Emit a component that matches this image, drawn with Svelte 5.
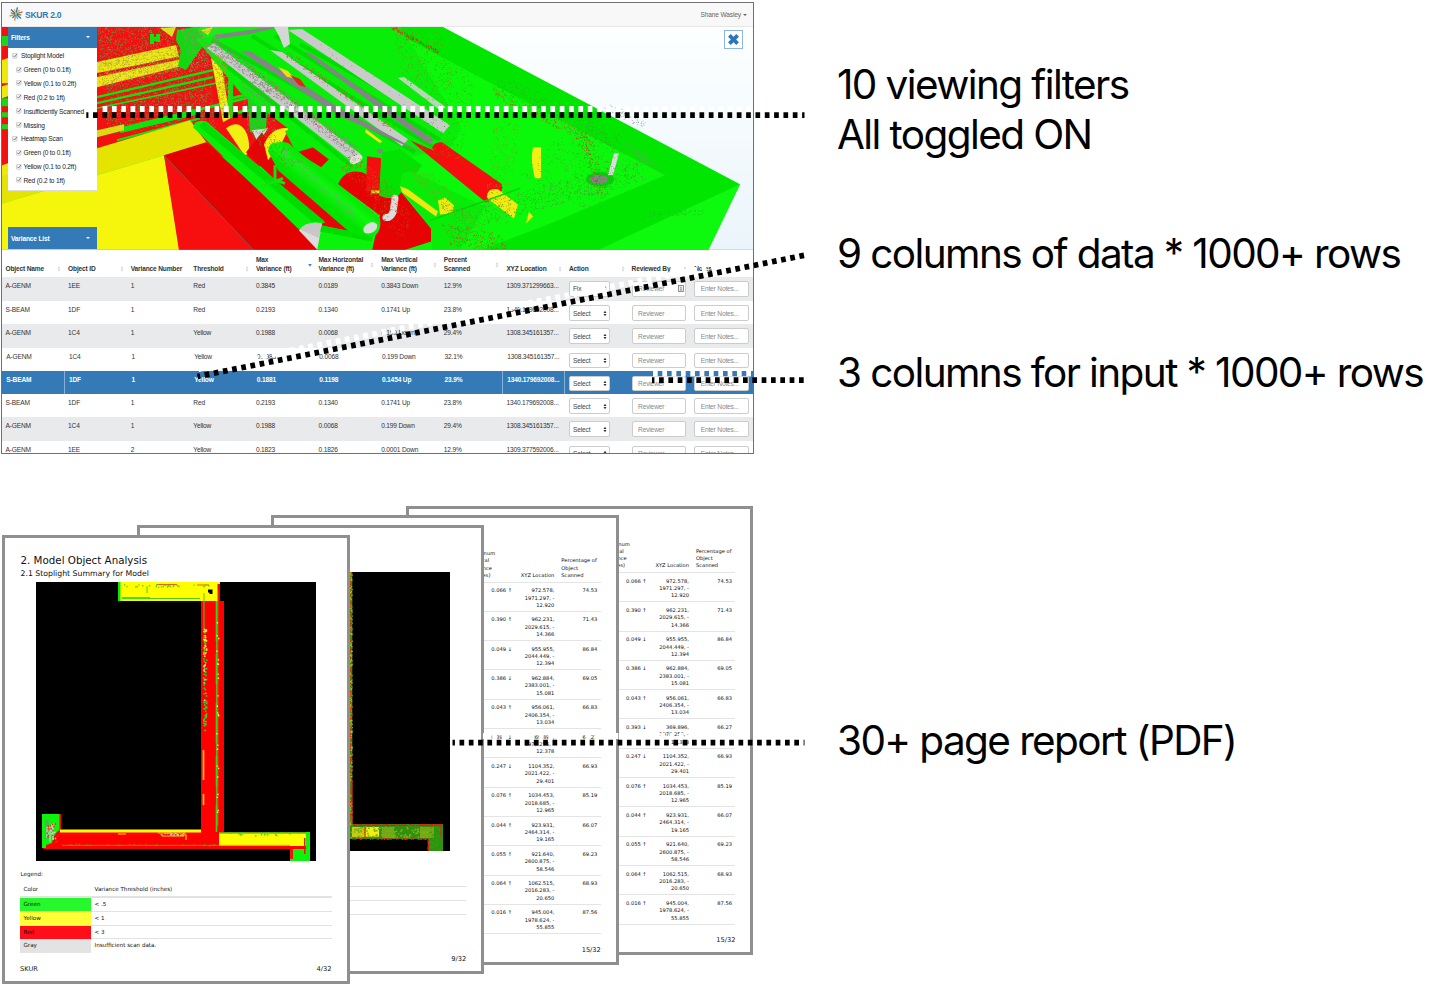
<script>
  const filters = [
    ['Stoplight Model', 0], ['Green (0 to 0.1ft)', 1], ['Yellow (0.1 to 0.2ft)', 1], ['Red (0.2 to 1ft)', 1],
    ['Insufficiently Scanned', 1], ['Missing', 1], ['Heatmap Scan', 0], ['Green (0 to 0.1ft)', 1],
    ['Yellow (0.1 to 0.2ft)', 1], ['Red (0.2 to 1ft)', 1]
  ];
  const columns = [
    ['Object Name'], ['Object ID'], ['Variance Number'], ['Threshold'], ['Max', 'Variance (ft)'],
    ['Max Horizontal', 'Variance (ft)'], ['Max Vertical', 'Variance (ft)'], ['Percent', 'Scanned'],
    ['XYZ Location'], ['Action'], ['Reviewed By'], ['Notes']
  ];
  const rows = [
    ['A-GENM', '1EE', '1', 'Red', '0.3845', '0.0189', '0.3843 Down', '12.9%', '1309.371299663...', 'Fix'],
    ['S-BEAM', '1DF', '1', 'Red', '0.2193', '0.1340', '0.1741 Up', '23.8%', '1340.179692008...', 'Select'],
    ['A-GENM', '1C4', '1', 'Yellow', '0.1988', '0.0068', '0.199 Down', '29.4%', '1308.345161357...', 'Select'],
    ['A-GENM', '1C4', '1', 'Yellow', '0.1983', '0.0068', '0.199 Down', '32.1%', '1308.345161357...', 'Select'],
    ['S-BEAM', '1DF', '1', 'Yellow', '0.1881', '0.1198', '0.1454 Up', '23.9%', '1340.179692008...', 'Select'],
    ['S-BEAM', '1DF', '1', 'Red', '0.2193', '0.1340', '0.1741 Up', '23.8%', '1340.179692008...', 'Select'],
    ['A-GENM', '1C4', '1', 'Yellow', '0.1988', '0.0068', '0.199 Down', '29.4%', '1308.345161357...', 'Select'],
    ['A-GENM', '1EE', '2', 'Yellow', '0.1823', '0.1826', '0.0001 Down', '12.9%', '1309.377592006...', 'Select']
  ];
  const report = [
    ['0.066 ↑', '972.578,', '1971.297, -', '12.920', '74.53'],
    ['0.390 ↑', '962.231,', '2029.615, -', '14.366', '71.43'],
    ['0.049 ↓', '955.955,', '2044.449, -', '12.394', '86.84'],
    ['0.386 ↓', '962.884,', '2383.001, -', '15.081', '69.05'],
    ['0.043 ↑', '956.061,', '2406.354, -', '13.034', '66.83'],
    ['0.393 ↓', '369.896,', '1978.256, -', '12.378', '66.27'],
    ['0.247 ↓', '1104.352,', '2021.422, -', '29.401', '66.93'],
    ['0.076 ↑', '1034.453,', '2018.685, -', '12.965', '85.19'],
    ['0.044 ↑', '923.931,', '2464.314, -', '19.165', '66.07'],
    ['0.055 ↑', '921.640,', '2600.875, -', '58.546', '69.23'],
    ['0.064 ↑', '1062.515,', '2016.283, -', '20.650', '68.93'],
    ['0.016 ↑', '945.004,', '1978.624, -', '55.855', '87.56']
  ];
  const legend = [['Green', '< .5', '#27f82d'], ['Yellow', '< 1', '#ffff38'], ['Red', '< 3', '#ff0d18'], ['Gray', 'Insufficient scan data.', '#e3e3e3']];

  let seed = 7;
  const rnd = () => ((seed = (seed * 16807) % 2147483647) / 2147483647);
  // Scatter n scan points over the parallelogram at (x, y) spanned by (ax, ay) and (bx, by).
  function scatter(n, x, y, ax, ay, bx, by, s = 0.8) {
    let d = '';
    for (let i = 0; i < n; i++) {
      const u = rnd(), v = rnd();
      d += `M${(x + u * ax + v * bx).toFixed(1)} ${(y + u * ay + v * by).toFixed(1)}h${s}v${s}h-${s}z`;
    }
    return d;
  }
  const noiseBack = [
    [scatter(2600, 97, 27, 108, 0, 10, 100), '#8a7a50'],
    [scatter(1000, 97, 27, 108, 0, 10, 105), '#20c818'],
    [scatter(700, 97, 62, 84, -17, 3, 24), '#a8a040']
  ];
  const noiseFront = [
    [scatter(750, 204, 43, 145, 111, 12, -5), '#858585'],
    [scatter(160, 230, 58, 125, 98, 6, -4), '#e04040'],
    [scatter(160, 280, 52, 110, 78, 6, -3), '#e04040'],
    [scatter(420, 180, 28, 40, 0, 10, 38), '#999070'],
    [scatter(340, 213, 55, 12, 0, 8, 60), '#a8a028'],
    [scatter(340, 240, 80, 28, 0, 8, 50), '#808878'],
    [scatter(260, 390, 27, 50, 4, 15, 60), '#7a8a20'],
    [scatter(150, 390, 28, 48, 26, 2, -3), '#d03010'],
    [scatter(280, 432, 60, 45, 10, -15, 90), '#55a010'],
    [scatter(220, 492, 85, 100, 50, 3, 12), '#b06018'],
    [scatter(260, 505, 75, 120, 62, -12, 12), '#3aa028'],
    [scatter(420, 575, 120, 70, 36, -55, 55), '#5a9838'],
    [scatter(140, 575, 135, 14, 2, 20, 58), '#b83c10'],
    [scatter(260, 495, 110, 25, 5, -12, 110), '#7aa018'],
    [scatter(620, 450, 210, 190, -52, 5, 22), '#4f9838'],
    [scatter(220, 440, 222, 60, 10, 10, 22), '#b05818'],
    [scatter(350, 398, 160, 38, 15, 50, 55), '#68b018'],
    [scatter(160, 245, 130, 40, 38, 18, -6), '#609020'],
    [scatter(260, 280, 155, 75, 66, 6, -6), '#78a078'],
    [scatter(190, 340, 168, 45, 40, 12, -18), '#b86010'],
    [scatter(160, 372, 180, 40, 32, -8, 26), '#a85810'],
    [scatter(80, 315, 30, 120, 40, 0, 50), '#70b030'],
    [scatter(70, 600, 107, 40, 20, 10, -4), '#909890'],
    [scatter(110, 622, 140, 25, 15, 15, 18), '#60a858'],
    [scatter(60, 648, 211, 55, -2, 0, 5), '#30a830']
  ];
  const planNoise = [
    [scatter(60, 203, 630, 3, 0, 0, 100, 1.6), '#18e018'],
    [scatter(20, 203, 630, 3, 0, 0, 70, 1.3), '#d8d8d8'],
    [scatter(22, 203, 628, 3, 0, 0, 40, 1.5), '#ffef20'],
    [scatter(24, 216, 600, 2, 0, 0, 225, 1.4), '#ffef20'],
    [scatter(30, 122, 584, 90, 0, 0, 3, 1.3), '#50d020'],
    [scatter(24, 60, 843, 160, 1, 0, 2, 1), '#50b010'],
    [scatter(18, 160, 832, 24, 0, 0, 3, 1.5), '#d0c8a0'],
    [scatter(16, 222, 832, 80, 0, 0, 3, 1.5), '#30e020'],
    [scatter(16, 46, 822, 10, 0, 0, 18, 1.4), '#c8d8c0'],
    [scatter(16, 46, 820, 12, 0, 0, 22, 1.4), '#f02810']
  ];
  const heatNoise = [
    [scatter(170, 349.5, 572, 2, 0, 0, 252, 1.3), '#b8c010'],
    [scatter(150, 349.5, 572, 2, 0, 0, 252, 1.2), '#e02810'],
    [scatter(130, 352, 824, 90, 0, 0, 1.2, 1.1), '#e01810'],
    [scatter(100, 350, 826, 78, 0, 0, 11, 1.6), '#80b010'],
    [scatter(70, 350, 838, 78, 0, 0, 1, 1.1), '#c83010'],
    [scatter(50, 428, 826, 12, 0, 0, 24, 1.3), '#30a010'],
    [scatter(18, 427, 838, 1, 0, 0, 12, 1.2), '#e01810']
  ];
  const burst = ['#2f6fb0', '#e0b030', '#d05050', '#4a9a60', '#2f6fb0', '#48a8d8', '#d89030', '#3b78b8', '#7cae50', '#c85858', '#2f6fb0', '#e0b848'];
</script>

<main>
  <section class="shots">
    <div class="app">
      <header>
        <svg class="logo" viewBox="-7 -7 14 14">
          {#each burst as c, i}
            <line x1="0" y1="-.8" x2="0" y2={i % 2 ? -5.4 : -6.8} stroke={c} stroke-width="1.3" transform="rotate({i * 30 + 12})" />
          {/each}
        </svg>
        <b>SKUR 2.0</b>
        <span class="user">Shane Wasley <i class="caret"></i></span>
      </header>
      <div class="viewer">
        <svg class="scene" viewBox="2 27 751 223" preserveAspectRatio="none">
          <defs>
            <linearGradient id="sky" x1="0" y1="0" x2="0" y2="1"><stop offset="0" stop-color="#fdffff" /><stop offset="1" stop-color="#eaf5fb" /></linearGradient>
            <linearGradient id="pipe" gradientUnits="userSpaceOnUse" x1="330" y1="170" x2="312" y2="192"><stop offset="0" stop-color="#00dc00" /><stop offset=".55" stop-color="#0df80d" /><stop offset="1" stop-color="#00e400" /></linearGradient>
          </defs>
          <rect x="2" y="27" width="751" height="223" fill="url(#sky)" />
          <path d="M2 27H443L740 184L708 250H2z" fill="#00e600" />
          <path d="M2 27H385L665 175L553 222L480 250H2z" fill="#0af80a" />
          <path d="M740 184L708 250H597z" fill="#0df90d" />
          <path d="M2 27H192L208 45L245 88L262 110L300 122L298 150L250 170L190 140L2 200z" fill="#f31010" />
          {#each noiseBack.slice(0, 2) as [d, fill]}<path {d} {fill} />{/each}
          <path d="M97 62L176 45L179 57L97 73zM97 77L182 59L186 65L97 87z" fill="#ece614" />
          <path d="M97 75L178 57" stroke="#e01818" />
          <path d={noiseBack[2][0]} fill={noiseBack[2][1]} />
          <g stroke="#0ce60c" fill="none">
            <path d="M97 97L213 70M97 103L213 77" stroke-width="2.2" /><path d="M97 108L216 83" stroke-width="1.6" />
            <path d="M97 135L135 125L250 97" stroke-width="3" /><path d="M120 131L200 112" stroke-width="3.5" /><path d="M117 140L200 118" stroke-width="2" />
            <path d="M231 65L230 118" stroke-width="5" /><path d="M150 39h10M152 34v10M158 34v8" stroke-width="4" />
            <path d="M232 98L262 91M232 113L262 108" stroke-width="3" />
          </g>
          <path d="M97 130L124 124V130L97 137z" fill="#ddd914" />
          <path d="M177 30L195 27L205 43L186 70L178 66L181 50L176 40z" fill="#12d812" />
          <path d="M160 28L176 27L172 37zM200 30L213 27L208 35z" fill="#e0e020" />
          <path d="M2 60L8 58V83H2zM2 165L8 163V178H2zM2 86L8 84V96L2 98z" fill="#eee80c" />
          <path d="M2 36h6v10H2zM2 98h6v8H2zM2 112h6v5H2zM2 124h6v5H2z" fill="#16d816" />
          <path d="M2 176L8 174V165L97 148L190 120L207 143L164 155L2 203z" fill="#e4e400" />
          <path d="M2 203L97 175L164 155L180 250H2z" fill="#f6f60d" />
          <path d="M164 155L206 142L326 250H254z" fill="#e50000" />
          <path d="M164 155L254 250H179z" fill="#f70f0f" />
          <path d="M164 155L254 250" stroke="#8b4858" stroke-width=".8" />
          <path d="M211 58L222 68L230 118L223 122L218 95z" fill="#f3ef14" />
          <path d="M226 128Q240 118 247 134Q252 150 245 156z" fill="#f3ef14" />
          <path d="M246 76L268 92L266 132H250z" fill="#12da12" />
          <path d="M252 130L268 128L258 143z" fill="#d9d9d9" />
          <path d="M246 152L262 132L273 150L352 231L320 226L286 190z" fill="#e40606" />
          <path d="M289 128Q272 126 264 144L268 160L282 142z" fill="#f3ef14" />
          <path d="M285 131L300 124L370 165L360 200L300 160z" fill="#06ec06" />
          <path d="M297 152L320 145L332 156L321 167z" fill="#e40606" />
          <path d="M338 184Q345 168 362 172L398 188L431 228V241L403 250H372L380 215z" fill="#e60303" />
          <path d="M193 127Q195 119 206 121L325 222L300 230z" fill="#08f008" /><path d="M204 121L325 221L312 221L199 126z" fill="#00dd00" />
          <path d="M299 230Q306 220 322 223L318 250z" fill="#dcdcdc" /><path d="M300 229L320 238L322 223Q307 220 300 229z" fill="#c7c7c7" />
          <path d="M322 225L373 236L371 250H317z" fill="#0af30a" /><path d="M322 225L373 235L372 241L320 231z" fill="#00dc00" />
          <path d="M268 151Q268 141 280 142Q288 141 292 146L380 218Q382 232 372 237L350 232L278 170z" fill="url(#pipe)" />
          <ellipse cx="370" cy="227.500" rx="7.500" ry="5" transform="rotate(-28 370 227)" fill="#d8dfd8" />
          <path d="M275 165V180L285 183M262 186L283 178" stroke="#0ae80a" stroke-width="3" fill="none" />
          <path d="M196 39L285 27H400L462 128L450 148L360 168L330 160L240 92z" fill="#08ee08" />
          <g stroke="#00db00" stroke-width="4"><path d="M212 40L415 152M252 36L435 148M275 36L440 140M222 62L352 166M300 44L440 122" /></g>
          <path d="M214 35L262 28L280 27L250 34L216 39z" fill="#848484" />
          <path d="M207 48L214 43L361 154L353 162z" fill="#c8c8c8" />
          <path d="M270 50L282 52L408 139L402 146z" fill="#c9c9c9" />
          <path d="M288 30L302 29L450 125L443 133z" fill="#cacaca" />
          <path d="M398 78L404 77L446 107L440 110z" fill="#b4d8b4" />
          <path d="M274 27H288L290 44L284 48L279 36z" fill="#d6d6d6" />
          <path d="M240 51L250 51L345 111L425 154L340 116zM304 52L312 54L434 140L429 144L372 103z" fill="#858585" />
          <path d="M278 67L288 71L294 78L287 77z" fill="#f0dc12" /><path d="M290 75L300 79L306 87L299 85z" fill="#ee2010" />
          <path d="M366 129L382 141L380 143L365 132z" fill="#f2e812" />
          <ellipse cx="356" cy="159" rx="7" ry="4" transform="rotate(-28 356 159)" fill="#dedede" />
          <ellipse cx="380" cy="151" rx="3" ry="2.500" fill="#858585" />
          <path d="M367 156L381 158L380 191H366z" fill="#f40f0f" /><path d="M371 190h9v3h-9z" fill="#f0dd10" />
          <path d="M382 152L400 149L422 165L397 197Q388 199 379 195z" fill="#03e303" />
          <path d="M395 198L393 212Q390 218 386 217" stroke="#dcdcdc" stroke-width="7" stroke-linecap="round" fill="none" />
          <path d="M400 186L402 173Q412 168 425 178L485 206L460 250H432L431 228z" fill="#08ed08" />
          <path d="M400 186L408 189L438 211L436 216L402 192z" fill="#f0e712" />
          <path d="M438 200L445 197L454 205L452 213L440 214z" fill="#f3e912" />
          <path d="M410 140L438 152L503 187L486 202z" fill="#f01010" /><path d="M432 148Q434 141 442 142L502 184V190L486 202z" fill="#f70d0d" />
          <path d="M487 197Q487 187 498 189L518 204L514 218L490 200z" fill="#f2e912" />
          <path d="M529 211L533 216L526 223z" fill="#efe612" />
          <path d="M533 147h8V178h-6Q530 160 533 147z" fill="#f3ef14" />
          <path d="M430 220L520 188" stroke="#00d800" stroke-width="1.500" />
          <ellipse cx="600" cy="179" rx="14" ry="7" fill="#00d400" /><ellipse cx="599" cy="179" rx="9" ry="4.500" fill="#858585" />
          <path d="M614 153h5L613 175H608z" fill="#dcdcdc" />
          {#each noiseFront as [d, fill]}<path {d} {fill} />{/each}
          <path d="M2 249.700H753" stroke="#6f9fcb" stroke-width="1" />
        </svg>
        <div class="panel filters">
          <div class="bar">Filters <i class="caret"></i></div>
          {#each filters as [label, depth]}
            <div class="check" class:sub={depth}>
              <svg viewBox="0 0 6 6"><rect x=".4" y=".6" width="4.600" height="4.600" rx=".6" fill="#f4f4f4" stroke="#b5b5b5" stroke-width=".6" /><path d="M1.300 2.700L2.500 4L5 .8" fill="none" stroke="#666" stroke-width=".8" /></svg>{label}
            </div>
          {/each}
        </div>
        <div class="panel variance"><div class="bar">Variance List <i class="caret"></i></div></div>
        <div class="close"><svg viewBox="0 0 12 12"><path d="M2.200 2.200L9.800 9.800M9.800 2.200L2.200 9.800" stroke="#2f76b5" stroke-width="3.500" /></svg></div>
      </div>
      <div class="row head">
        {#each columns as lines, i}
          <div class="cell">
            <span>{#each lines as l}<span class="line">{l}</span>{/each}</span>
            {#if i !== 2 && i !== 11}
              <svg class="sort" class:two={lines.length > 1} viewBox="0 0 4 6">
                {#if i === 4}<path d="M.2 2H3.800L2 4.800z" fill="#3b86c6" />{:else}<path d="M.6 2.500L2 .6L3.400 2.500zM.6 3.500L2 5.400L3.400 3.500z" fill="#cfcfcf" />{/if}
              </svg>
            {/if}
          </div>
        {/each}
      </div>
      {#each rows as r, n}
        <div class="row data" class:gray={n === 0 || n === 2 || n === 6} class:sel={n === 4} class:shift={n === 3}>
          {#each r.slice(0, 9) as v}<div class="cell">{v}</div>{/each}
          <div class="cell"><div class="field select">{r[9]}<svg viewBox="0 0 4 7"><path d="M.5 3L2 .8L3.500 3zM.5 4L2 6.200L3.500 4z" fill="#333" /></svg></div></div>
          <div class="cell"><div class="field input">Reviewer{#if n === 0}<svg viewBox="0 0 6 7"><rect x=".5" y=".5" width="5" height="6" fill="#eee" stroke="#777" stroke-width=".8" /><path d="M3 2v3M2 5h2M2.200 2.400L3 2" stroke="#777" stroke-width=".7" /></svg>{/if}</div></div>
          <div class="cell"><div class="field input">Enter Notes...</div></div>
        </div>
      {/each}
    </div>

    <div class="stack">
      <article class="page p1">
        <h1>2. Model Object Analysis</h1>
        <h2>2.1 Stoplight Summary for Model</h2>
        <svg class="plan" viewBox="36 582 280 279">
          <rect x="36" y="582" width="280" height="279" fill="#000" />
          <path d="M118 582H220V601H118z" fill="#ffff00" /><path d="M118 582h2.500v19H118z" fill="#0be60b" />
          <path d="M201 601H224V832H201z" fill="#ff0000" /><path d="M217.500 584h2.500v18h-2.500z" fill="#f00" /><path d="M157 584.500h20M197 585h12" stroke="#f25a18" />
          <path d="M122 598h28" stroke="#27dc10" stroke-width="1.800" /><path d="M150 598.500h50M147 586v7M204 593v8" stroke="#55c810" stroke-width="1" />
          <path d="M208 589.500h4.500v4.500h-3v-1.500H208z" fill="#000" />
          <path d="M204 601V630M216.500 601V832" stroke="#60b020" stroke-width="1.200" /><path d="M216.500 601V832" stroke="#30d818" stroke-width="1.500" stroke-dasharray="40 13 30 19" />
          <path d="M217.800 590V826" stroke="#c8b020" stroke-width=".6" /><path d="M203.500 750v30M203.500 794v11" stroke="#f5d010" stroke-width="1.600" />
          <path d="M42 814h19v16H200v2H310V849H44L42 848z" fill="#ff0000" />
          <path d="M60 829.500H201V832.500H60z" fill="#ffff00" /><path d="M42 814H59.500V830Q54 833 52 843L46 845V848H42z" fill="#0cf40c" />
          <path d="M45 820h4v19h-4z" fill="#48b848" /><path d="M50 825v17M53 825v15M47 828v10" stroke="#d6d6d6" />
          <path d="M219 833H307V846H219z" fill="#ffff00" /><path d="M219 833H307" stroke="#36dc18" stroke-width="1.600" /><path d="M62 845.300H290" stroke="#74a810" stroke-width=".8" />
          <path d="M158 833h28M180 835h6v5M118 834h8M162 836h22" stroke="#eed51a" stroke-width="1.200" fill="none" />
          <path d="M306 832h4v29H290V849h16z" fill="#0cf40c" /><path d="M290 849h3v10h-3zM304 838h1.500v16h-1.500z" fill="#e51a10" />
          {#each planNoise as [d, fill]}<path {d} {fill} />{/each}
        </svg>
        <p class="cap">Legend:</p>
        <div class="lg lh"><span>Color</span><span>Variance Threshold (inches)</span></div>
        {#each legend as [n, t, c]}<div class="lg"><span style:background={c}>{n}</span><span>{t}</span></div>{/each}
        <footer><span>SKUR</span><span>4/32</span></footer>
      </article>
      <article class="page p2">
        <svg class="plan" viewBox="170 572 280 279">
          <rect x="170" y="572" width="280" height="279" fill="#000" />
          <path d="M345 572h7.300V824h-7.300z" fill="#4a8c10" /><path d="M345 824H443V851H428V839H345z" fill="#309010" />
          <path d="M352 827h27v10h-27z" fill="#c8cc10" /><path d="M366 827h13v9h-13z" fill="#f0f010" /><path d="M382 827h12v11h-12zM420 827h14v11h-14z" fill="#70a818" />
          {#each heatNoise as [d, fill]}<path {d} {fill} />{/each}
          <path d="M352 780V824M365 827v10M420 825h21v12" stroke="#e41c10" stroke-width="1" fill="none" />
        </svg>
        <div class="rules"><div></div><div></div><div></div></div>
        <footer><span></span><span>9/32</span></footer>
      </article>
      {#each ['p3', 'p4'] as p}
        <article class="page {p}">
          <div class="rep rh"><i></i><div>Maximum<br />Vertical<br />Variance<br />(inches)</div><div class="r">XYZ Location</div><div>Percentage of<br />Object<br />Scanned</div></div>
          {#each report as r}
            <div class="rep"><i></i><div class="r arrow">{r[0]}</div><div class="r">{r[1]}<br />{r[2]}<br />{r[3]}</div><div class="r pct">{r[4]}</div></div>
          {/each}
          <footer><span></span><span>15/32</span></footer>
        </article>
      {/each}
    </div>
  </section>

  <section class="notes">
    <p class="n1">10 viewing filters</p>
    <p class="n2">All toggled ON</p>
    <p class="n3">9 columns of data * 1000+ rows</p>
    <p class="n4">3 columns for input * 1000+ rows</p>
    <p class="n5">30+ page report (PDF)</p>
  </section>

  <svg class="leaders" viewBox="0 0 1440 989">
    <g stroke="#fff" stroke-width="6" stroke-dasharray="4.700 4.630">
      <path d="M102.600 109H757" /><path d="M198.500 369L798 249.500" /><path d="M653 373.500H757" /><path d="M455 736H757" />
    </g>
    <g stroke="#000" stroke-width="5.700" stroke-dasharray="4.700 4.630">
      <path d="M86.300 115.200H804.500" stroke-dashoffset="2.600" /><path d="M197.500 376.500L804.500 255.300" stroke-dashoffset="2" /><path d="M652 380.200H804.500" stroke-dashoffset="2.300" /><path d="M452.500 742.700H804.500" stroke-dashoffset="2.300" stroke-dasharray="4.700 4.600" />
    </g>
  </svg>
</main>

<style>
  :global(body) { margin: 0; background: #fff; }
  main { position: relative; display: grid; grid-template-columns: 837px 1fr; width: 1440px; height: 989px; overflow: hidden; background: #fff; font-family: "Liberation Sans", Arial, sans-serif; color: #333; }
  p, h1, h2 { margin: 0; font-weight: 400; }
  .app { box-sizing: border-box; width: 753px; height: 452.500px; margin: 1.5px 0 0 1px; border: 1px solid #707070; border-top-width: 1.5px; overflow: hidden; font-size: 6.600px; letter-spacing: -.165px; background: #fff; }
  header { display: flex; align-items: center; height: 24px; background: #f8f8f8; border-bottom: 1px solid #e7e7e7; box-sizing: border-box; }
  .logo { width: 14px; height: 14px; margin: 0 2px 0 7px; }
  header b { font-size: 8.600px; letter-spacing: -.3px; color: #337ab7; padding-top: 1px; }
  .user { margin-left: auto; margin-right: 6.500px; color: #666; }
  .caret { display: inline-block; border: 2.500px solid transparent; border-top-color: currentColor; border-bottom: 0; vertical-align: 1px; margin-left: 1px; }
  .user .caret { border-width: 2px 2px 0; margin-left: 0; }
  .viewer { position: relative; height: 223.500px; }
  .scene { display: block; width: 100%; height: 100%; }
  .panel { position: absolute; left: 6px; width: 89px; background: #fff; }
  .filters { top: 0; height: 163.500px; border-bottom: 1px solid #ddd; }
  .variance { bottom: 1px; }
  .bar { display: flex; justify-content: space-between; align-items: center; height: 21.500px; padding: 0 7.500px 0 3px; background: #337ab7; color: #fff; font-weight: 700; margin-bottom: .8px; }
  .variance .bar { margin: 0; height: 22px; }
  .check { display: flex; align-items: center; height: 13.870px; padding-left: 4px; color: #222; }
  .check svg { width: 6px; height: 6px; margin-right: 3px; }
  .check.sub { padding-left: 8px; }
  .check.sub svg { margin-right: 1.500px; }
  .close { position: absolute; right: 10px; top: 3px; width: 17px; height: 17px; border: 1px solid #8db7dc; background: #fff; display: grid; place-items: center; }
  .close svg { width: 13px; height: 13px; }
  .row { display: grid; grid-template-columns: repeat(12, 62.610px); height: 22.850px; width: 752px; }
  .cell { padding-left: 3.500px; white-space: nowrap; position: relative; }
  .head { height: 26.500px; font-weight: 700; align-items: end; color: #333; }
  .head .cell { display: flex; justify-content: space-between; align-items: end; padding-bottom: 3px; }
  .line { display: block; line-height: 9.300px; }
  .sort { width: 4px; height: 6px; margin: 0 3.500px 1.500px 0; }
  .sort.two { margin-bottom: 6px; }
  .data { line-height: 9px; }
  .data .cell { padding-top: 4.100px; }
  .data.gray { background: #e8eaeb; height: 24.400px; }
  .data.gray .cell { padding-top: 4.400px; }
  .data.shift .cell { padding-left: 4.300px; }
  .data.sel { background: #337ab7; color: #fff; font-weight: 700; }
  .data.sel .cell { padding-left: 4.300px; padding-top: 4px; }
  .data.sel .cell:nth-child(2), .data.sel .cell:nth-child(9), .data.sel .cell:nth-child(10) { box-shadow: -1px 0 #86b0d6; }
  .data .cell:nth-child(n + 10), .data.gray .cell:nth-child(n + 10), .data.sel .cell:nth-child(n + 10) { padding-left: 3.500px; padding-top: 4.600px; }
  .field { box-sizing: border-box; display: flex; align-items: center; justify-content: space-between; height: 15.500px; border: 1px solid #ccc; border-radius: 2px; background: #fff; color: #444; font-weight: 400; padding: 0 0 0 3px; }
  .select { width: 41px; }
  .select svg { width: 4px; height: 7px; margin-right: 1.500px; }
  .input { width: 54.500px; color: #888; padding-left: 5.500px; }
  .input svg { width: 6px; height: 7px; margin-right: 1px; }

  .stack { display: flex; align-items: flex-start; margin: 51.500px 0 0 2px; font-family: "DejaVu Sans", sans-serif; color: #111; }
  .page { box-sizing: border-box; position: relative; display: flex; flex-direction: column; width: 347.500px; height: 449.500px; border: 3px solid #8f8f8f; background: #fff; flex: none; padding: 0 15px; margin-left: -212.850px; }
  .p1 { z-index: 4; margin-left: 0; margin-top: 29px; }
  .p2 { z-index: 3; margin-top: 19px; }
  .p3 { z-index: 2; margin-top: 9.600px; }
  .p4 { z-index: 1; }
  h1 { font-size: 10.300px; line-height: 14px; margin-top: 15.500px; padding-left: .5px; }
  h2 { font-size: 7.760px; line-height: 10px; margin-top: 1.500px; padding-left: .5px; }
  .plan { width: 280px; height: 279px; margin: 3.500px 0 0 16px; flex: none; }
  .p2 .plan { margin: 44px 0 0 15.600px; }
  .cap { font-size: 5.600px; line-height: 8px; margin-top: 9px; padding-left: .5px; }
  .lg { display: grid; grid-template-columns: 71px 1fr; font-size: 5.600px; height: 13.800px; line-height: 13px; width: 312px; box-sizing: border-box; border-bottom: 1px solid #e2e2e2; }
  .lg span { padding-left: 3.500px; }
  .lh { border-bottom-width: 2px; height: 15px; margin-top: 5px; }
  .lg:last-of-type { border: 0; }
  footer { display: flex; justify-content: space-between; font-size: 6.650px; line-height: 9px; width: 311.500px; margin-top: auto; margin-bottom: 6.800px; }
  .rules { width: 311.500px; margin-top: 35.500px; }
  .rules div { height: 14px; border-top: 1px solid #e2e2e2; box-sizing: border-box; }
  .rep { display: grid; grid-template-columns: 177px 49.200px 42.300px 43px; width: 311.500px; height: 29.300px; box-sizing: border-box; border-bottom: 1px solid #e4e4e4; font-size: 5.150px; line-height: 7.330px; padding-top: 4.600px; }
  .rep > div { padding: 0 3.500px; white-space: nowrap; }
  .r { text-align: right; }
  .rh { height: 64.500px; align-items: end; padding-bottom: 2.200px; }
  .notes { font-family: Inter, sans-serif; color: #000; font-size: 40.500px; line-height: 50px; white-space: nowrap; letter-spacing: -1.600px; }
  .n1 { margin-top: 60px; }
  .n3 { margin-top: 68.500px; }
  .n4 { margin-top: 69px; }
  .n5 { margin-top: 318px; }
  .leaders { position: absolute; inset: 0; width: 1440px; height: 989px; z-index: 10; fill: none; pointer-events: none; }
</style>
